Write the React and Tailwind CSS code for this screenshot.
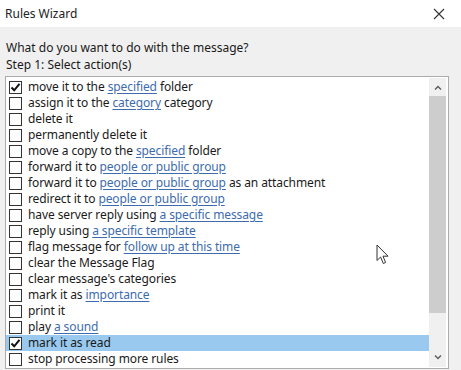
import { useState } from 'react'

const rows = [
  { parts: ['move it to the ', { link: 'specified' }, ' folder'], checked: true },
  { parts: ['assign it to the ', { link: 'category' }, ' category'] },
  { parts: ['delete it'] },
  { parts: ['permanently delete it'] },
  { parts: ['move a copy to the ', { link: 'specified' }, ' folder'] },
  { parts: ['forward it to ', { link: 'people or public group' }] },
  { parts: ['forward it to ', { link: 'people or public group' }, ' as an attachment'] },
  { parts: ['redirect it to ', { link: 'people or public group' }] },
  { parts: ['have server reply using ', { link: 'a specific message' }] },
  { parts: ['reply using ', { link: 'a specific template' }] },
  { parts: ['flag message for ', { link: 'follow up at this time' }] },
  { parts: ['clear the Message Flag'] },
  { parts: ["clear message's categories"] },
  { parts: ['mark it as ', { link: 'importance' }] },
  { parts: ['print it'] },
  { parts: ['play ', { link: 'a sound' }] },
  { parts: ['mark it as read'], checked: true, selected: true },
  { parts: ['stop processing more rules'] },
]

function Check() {
  return (
    <svg width="11" height="11" viewBox="0 0 11 11">
      <path d="M1.5 5.5 L4.2 8.3 L9.5 1.8" fill="none" stroke="#111" strokeWidth="2" />
    </svg>
  )
}

function App() {
  const [items, setItems] = useState(rows)

  const toggle = (i) => {
    setItems(prev => prev.map((r, j) => (j === i ? { ...r, checked: !r.checked } : r)))
  }

  return (
    <div className="relative w-[461px] h-[370px] overflow-hidden bg-[#f0f0f0] text-[12px] text-[#1a1a1a]" style={{ fontFamily: '"Noto Sans", "Open Sans", sans-serif' }}>
      {/* Title bar */}
      <div className="h-[27px] bg-white flex items-center justify-between pl-[5px] pr-[16px]">
        <span className="text-[12px] text-[#222]">Rules Wizard</span>
        <svg width="12" height="12" viewBox="0 0 12 12">
          <path d="M1 1 L11 11 M11 1 L1 11" stroke="#333" strokeWidth="1.1" />
        </svg>
      </div>

      {/* Body */}
      <div className="pl-[6px] pt-[12px] leading-[17px]">
        <p>What do you want to do with the message?</p>
        <p>Step 1: Select action(s)</p>
      </div>

      <div className="absolute left-[5px] top-[76px] w-[444px] h-[293px] bg-white border border-[#acacac] flex">
        <div className="flex-1 pt-[2px]">
          {items.map((r, i) => (
            <div
              key={i}
              onClick={() => toggle(i)}
              className={`h-[16px] flex items-center gap-[6px] pl-[3px] whitespace-nowrap ${r.selected ? 'bg-[#99c9ef]' : ''}`}
            >
              <span className="w-[13px] h-[13px] border border-[#333] bg-white flex items-center justify-center shrink-0">
                {r.checked && <Check />}
              </span>
              <span className="tracking-[-0.1px]">
                {r.parts.map((p, k) =>
                  typeof p === 'string' ? (
                    <span key={k}>{p.replace(/ /g, '\u00a0')}</span>
                  ) : (
                    <span key={k} className="text-[#3d6cae] underline underline-offset-[2px]">{p.link}</span>
                  )
                )}
              </span>
            </div>
          ))}
        </div>

        {/* Scrollbar */}
        <div className="w-[17px] mr-[2px] mt-[1px] mb-[1px] bg-[#f0f0f0] flex flex-col">
          <div className="h-[18px] flex items-center justify-center">
            <svg width="8" height="5" viewBox="0 0 8 5">
              <path d="M1 4.5 L4 1.5 L7 4.5" fill="none" stroke="#606060" strokeWidth="1.5" />
            </svg>
          </div>
          <div className="h-[217px] bg-[#cdcdcd]" />
          <div className="flex-1" />
          <div className="h-[19px] flex items-center justify-center">
            <svg width="8" height="5" viewBox="0 0 8 5">
              <path d="M1 0.5 L4 3.5 L7 0.5" fill="none" stroke="#606060" strokeWidth="1.5" />
            </svg>
          </div>
        </div>
      </div>

      {/* Mouse cursor */}
      <svg className="absolute left-[376px] top-[244px]" width="14" height="22" viewBox="0 0 14 22">
        <path d="M1 1 L1 16.5 L4.6 13 L7.3 19.5 L9.6 18.5 L7 12.2 L12 12.2 Z" fill="white" stroke="#333" strokeWidth="1" strokeLinejoin="round" />
      </svg>
    </div>
  )
}

export default App
